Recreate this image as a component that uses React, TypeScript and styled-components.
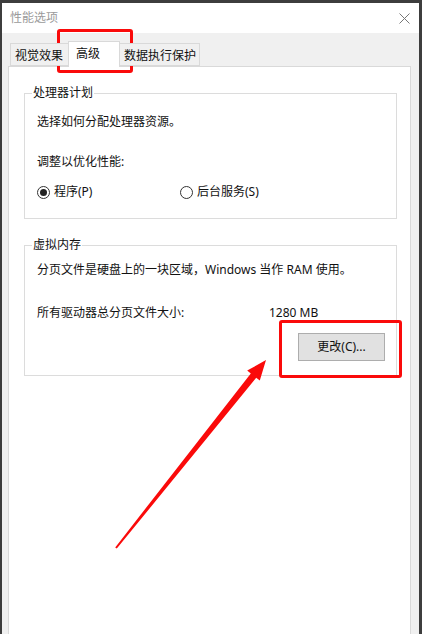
import React from "react";
import styled, { createGlobalStyle } from "styled-components";

const Global = createGlobalStyle`
  html, body { margin: 0; padding: 0; overflow: hidden; }
  body {
    background: #3d3d3d;
    font-family: "Segoe UI", "Noto Sans", "Noto Sans CJK SC", sans-serif;
    font-size: 12px;
    color: #111;
  }
`;

const Stage = styled.div`
  position: relative;
  width: 422px;
  height: 634px;
  overflow: hidden;
`;

const Window = styled.div`
  margin: 3px 0 0 2px;
  width: 417px;
  height: 660px;
  background: #f0f0f0;
  display: flex;
  flex-direction: column;
`;

const TitleBar = styled.div`
  height: 30px;
  flex: none;
  background: #fff;
  display: flex;
  align-items: center;
  justify-content: space-between;
  padding: 0 9px 0 8px;
`;

const Title = styled.span`
  color: #9a9a9a;
  font-size: 12px;
  line-height: 16px;
`;

const Body = styled.div`
  flex: 1;
  display: flex;
  flex-direction: column;
  padding: 8px 8px 0 6px;
`;

const TabStrip = styled.div`
  display: flex;
  align-items: flex-start;
  height: 25px;
  padding-left: 2px;
  position: relative;
  z-index: 1;
`;

const Tab = styled.div<{ $w: number; $active?: boolean; $pl: number }>`
  box-sizing: border-box;
  width: ${(p) => p.$w}px;
  margin-left: -1px;
  &:first-child { margin-left: 0; }
  margin-top: ${(p) => (p.$active ? 0 : 2)}px;
  height: ${(p) => (p.$active ? 26 : 23)}px;
  padding-left: ${(p) => p.$pl}px;
  padding-top: ${(p) => (p.$active ? 4 : 4)}px;
  line-height: 16px;
  background: ${(p) => (p.$active ? "#fff" : "#f0f0f0")};
  border: 1px solid #d9d9d9;
  border-bottom: ${(p) => (p.$active ? "none" : "1px solid #d9d9d9")};
  position: relative;
  z-index: ${(p) => (p.$active ? 2 : 1)};
  white-space: nowrap;
`;

const Panel = styled.div`
  flex: 1;
  background: #fff;
  border: 1px solid #d9d9d9;
  padding: 18px 13px 0 15px;
  display: flex;
  flex-direction: column;
  gap: 18px;
`;

const Group = styled.fieldset<{ $pt: number; $pb: number }>`
  margin: 0;
  min-width: 0;
  border: 1px solid #dcdcdc;
  padding: ${(p) => p.$pt}px 11px ${(p) => p.$pb}px 12px;
  display: flex;
  flex-direction: column;
`;

const Legend = styled.legend`
  padding: 0 1px;
  margin-left: -5px;
  line-height: 16px;
`;

const Line = styled.div<{ $mt?: number }>`
  line-height: 16px;
  margin-top: ${(p) => p.$mt ?? 0}px;
  white-space: nowrap;
`;

const SizeRow = styled.div<{ $mt: number }>`
  display: flex;
  line-height: 16px;
  margin-top: ${(p) => p.$mt}px;
`;

const SizeLabel = styled.span`
  width: 232px;
  flex: none;
`;

const RadioRow = styled.div<{ $mt: number }>`
  display: flex;
  align-items: center;
  margin-top: ${(p) => p.$mt}px;
  height: 16px;
`;

const RadioItem = styled.label<{ $w?: number }>`
  display: flex;
  align-items: center;
  gap: 4px;
  width: ${(p) => (p.$w ? `${p.$w}px` : "auto")};
  line-height: 16px;
`;

const RadioCircle = styled.span<{ $on?: boolean }>`
  box-sizing: border-box;
  width: 13px;
  height: 13px;
  border-radius: 50%;
  border: 1px solid #333;
  display: flex;
  align-items: center;
  justify-content: center;
  &::after {
    content: "";
    width: 7px;
    height: 7px;
    border-radius: 50%;
    background: ${(p) => (p.$on ? "#222" : "transparent")};
  }
`;

const ButtonRow = styled.div`
  display: flex;
  justify-content: flex-end;
  margin-top: 12px;
`;

const Button = styled.button`
  box-sizing: border-box;
  width: 87px;
  height: 28px;
  background: #e1e1e1;
  border: 1px solid #adadad;
  font: inherit;
  color: #111;
  padding: 0;
  line-height: 16px;
`;

const Overlay = styled.div`
  position: absolute;
  inset: 0;
  pointer-events: none;
`;

const RedBox = styled.div<{ $x: number; $y: number; $w: number; $h: number }>`
  position: absolute;
  box-sizing: border-box;
  left: ${(p) => p.$x}px;
  top: ${(p) => p.$y}px;
  width: ${(p) => p.$w}px;
  height: ${(p) => p.$h}px;
  border: 3px solid #fa0a0a;
  border-radius: 3px;
`;

const ArrowSvg = styled.svg`
  position: absolute;
  left: 0;
  top: 0;
`;

function CloseIcon() {
  return (
    <svg width="11" height="11" viewBox="0 0 11 11">
      <path d="M0.5 0.5 L10.5 10.5 M10.5 0.5 L0.5 10.5" stroke="#777" strokeWidth="1" />
    </svg>
  );
}

export default function App() {
  return (
    <Stage>
      <Global />
      <Window>
        <TitleBar>
          <Title>性能选项</Title>
          <CloseIcon />
        </TitleBar>
        <Body>
          <TabStrip>
            <Tab $w={59} $pl={4}>视觉效果</Tab>
            <Tab $w={52} $pl={7} $active>高级</Tab>
            <Tab $w={81} $pl={4}>数据执行保护</Tab>
          </TabStrip>
          <Panel>
            <Group $pt={13} $pb={18}>
              <Legend>处理器计划</Legend>
              <Line>选择如何分配处理器资源。</Line>
              <Line $mt={24}>调整以优化性能:</Line>
              <RadioRow $mt={14}>
                <RadioItem $w={143}>
                  <RadioCircle $on />
                  程序(P)
                </RadioItem>
                <RadioItem>
                  <RadioCircle />
                  后台服务(S)
                </RadioItem>
              </RadioRow>
            </Group>
            <Group $pt={9} $pb={14}>
              <Legend>虚拟内存</Legend>
              <Line>分页文件是硬盘上的一块区域，Windows 当作 RAM 使用。</Line>
              <SizeRow $mt={27}>
                <SizeLabel>所有驱动器总分页文件大小:</SizeLabel>
                <span>1280 MB</span>
              </SizeRow>
              <ButtonRow>
                <Button>更改(C)...</Button>
              </ButtonRow>
            </Group>
          </Panel>
        </Body>
      </Window>
      <Overlay>
        <RedBox $x={57} $y={29} $w={76} $h={44} />
        <RedBox $x={279} $y={320} $w={123} $h={58} />
        <ArrowSvg width="422" height="634" viewBox="0 0 422 634">
          <polygon
            points="266,360 259.8,380.6 256.2,377.8 116.8,548.6 115.2,547.4 250.8,373.4 247.2,370.6"
            fill="#fa0a0a"
          />
        </ArrowSvg>
      </Overlay>
    </Stage>
  );
}
